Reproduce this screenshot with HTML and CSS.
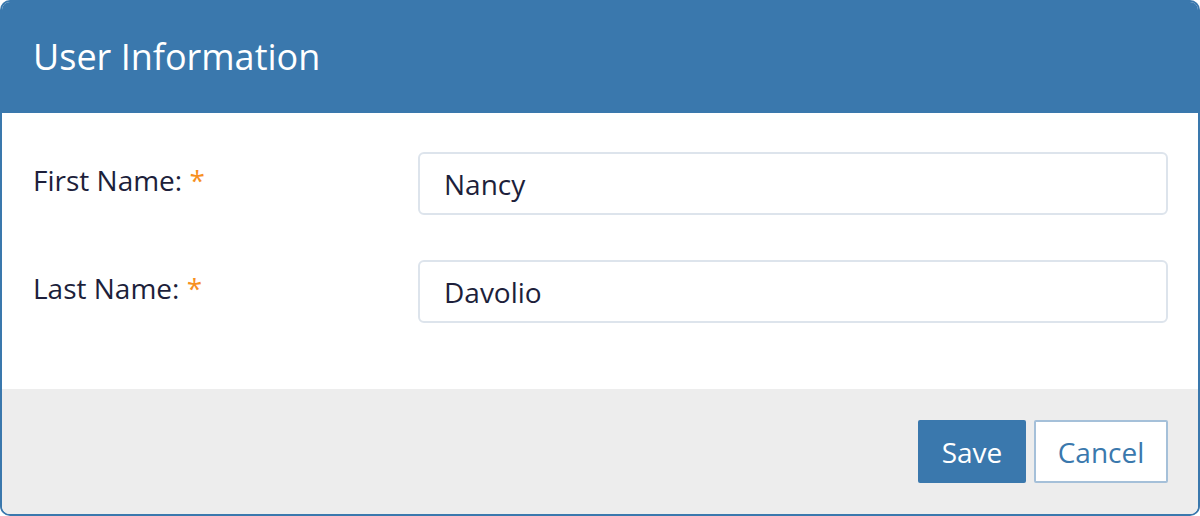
FILE: index.html
```html
<!DOCTYPE html>
<html lang="en">
<head>
    <meta charset="UTF-8">
    <title>User Information</title>
    <link rel="stylesheet" href="styles.css">
</head>
<body>
    <div class="dialog">
        <div class="dialog-header">
            <h1 class="dialog-title">User Information</h1>
        </div>

        <div class="dialog-body">
            <div class="form-row">
                <label class="form-label" for="firstName">First Name: <span class="required">*</span></label>
                <input class="form-input" id="firstName" type="text" value="Nancy">
            </div>
            <div class="form-row">
                <label class="form-label" for="lastName">Last Name: <span class="required">*</span></label>
                <input class="form-input" id="lastName" type="text" value="Davolio">
            </div>
        </div>

        <div class="dialog-footer">
            <button class="btn btn-primary">Save</button>
            <button class="btn btn-secondary">Cancel</button>
        </div>
    </div>
</body>
</html>
```

FILE: styles.css
```css
* {
    margin: 0;
    padding: 0;
    box-sizing: border-box;
}

body {
    font-family: 'Open Sans', sans-serif;
    background: #ffffff;
    width: 1200px;
    height: 516px;
    overflow: hidden;
}

.dialog {
    width: 1200px;
    height: 516px;
    border: 2px solid #3a78ad;
    border-radius: 10px;
    overflow: hidden;
    display: flex;
    flex-direction: column;
    background: #ffffff;
}

.dialog-header {
    background: #3a78ad;
    height: 111px;
    padding: 0 31px;
    display: flex;
    align-items: center;
}

.dialog-title {
    color: #ffffff;
    font-size: 36px;
    font-weight: 400;
    margin-top: -2px;
}

.dialog-body {
    padding: 39px 30px 0 31px;
    height: 276px;
    display: flex;
    flex-direction: column;
    gap: 45px;
}

.form-row {
    display: flex;
    align-items: center;
}

.form-label {
    width: 385px;
    font-size: 28px;
    color: #1d1f3b;
    margin-top: -7px;
}

.required {
    color: #f7901e;
}

.form-input {
    flex: 1;
    height: 63px;
    border: 2px solid #dde4ec;
    border-radius: 6px;
    padding: 0 24px;
    font-family: 'Open Sans', sans-serif;
    font-size: 28px;
    color: #1d1f3b;
    background: #ffffff;
    outline: none;
}

.dialog-footer {
    flex: 1;
    background: #ededed;
    display: flex;
    justify-content: flex-end;
    align-items: center;
    gap: 8px;
    padding-right: 30px;
}

.btn {
    height: 63px;
    font-family: 'Open Sans', sans-serif;
    font-size: 28px;
    cursor: pointer;
}

.btn-primary {
    width: 108px;
    background: #3a78ad;
    color: #ffffff;
    border: none;
    border-radius: 2px;
}

.btn-secondary {
    width: 134px;
    background: #ffffff;
    color: #3a78ad;
    border: 2px solid #a5c0d9;
    border-radius: 2px;
}
```
